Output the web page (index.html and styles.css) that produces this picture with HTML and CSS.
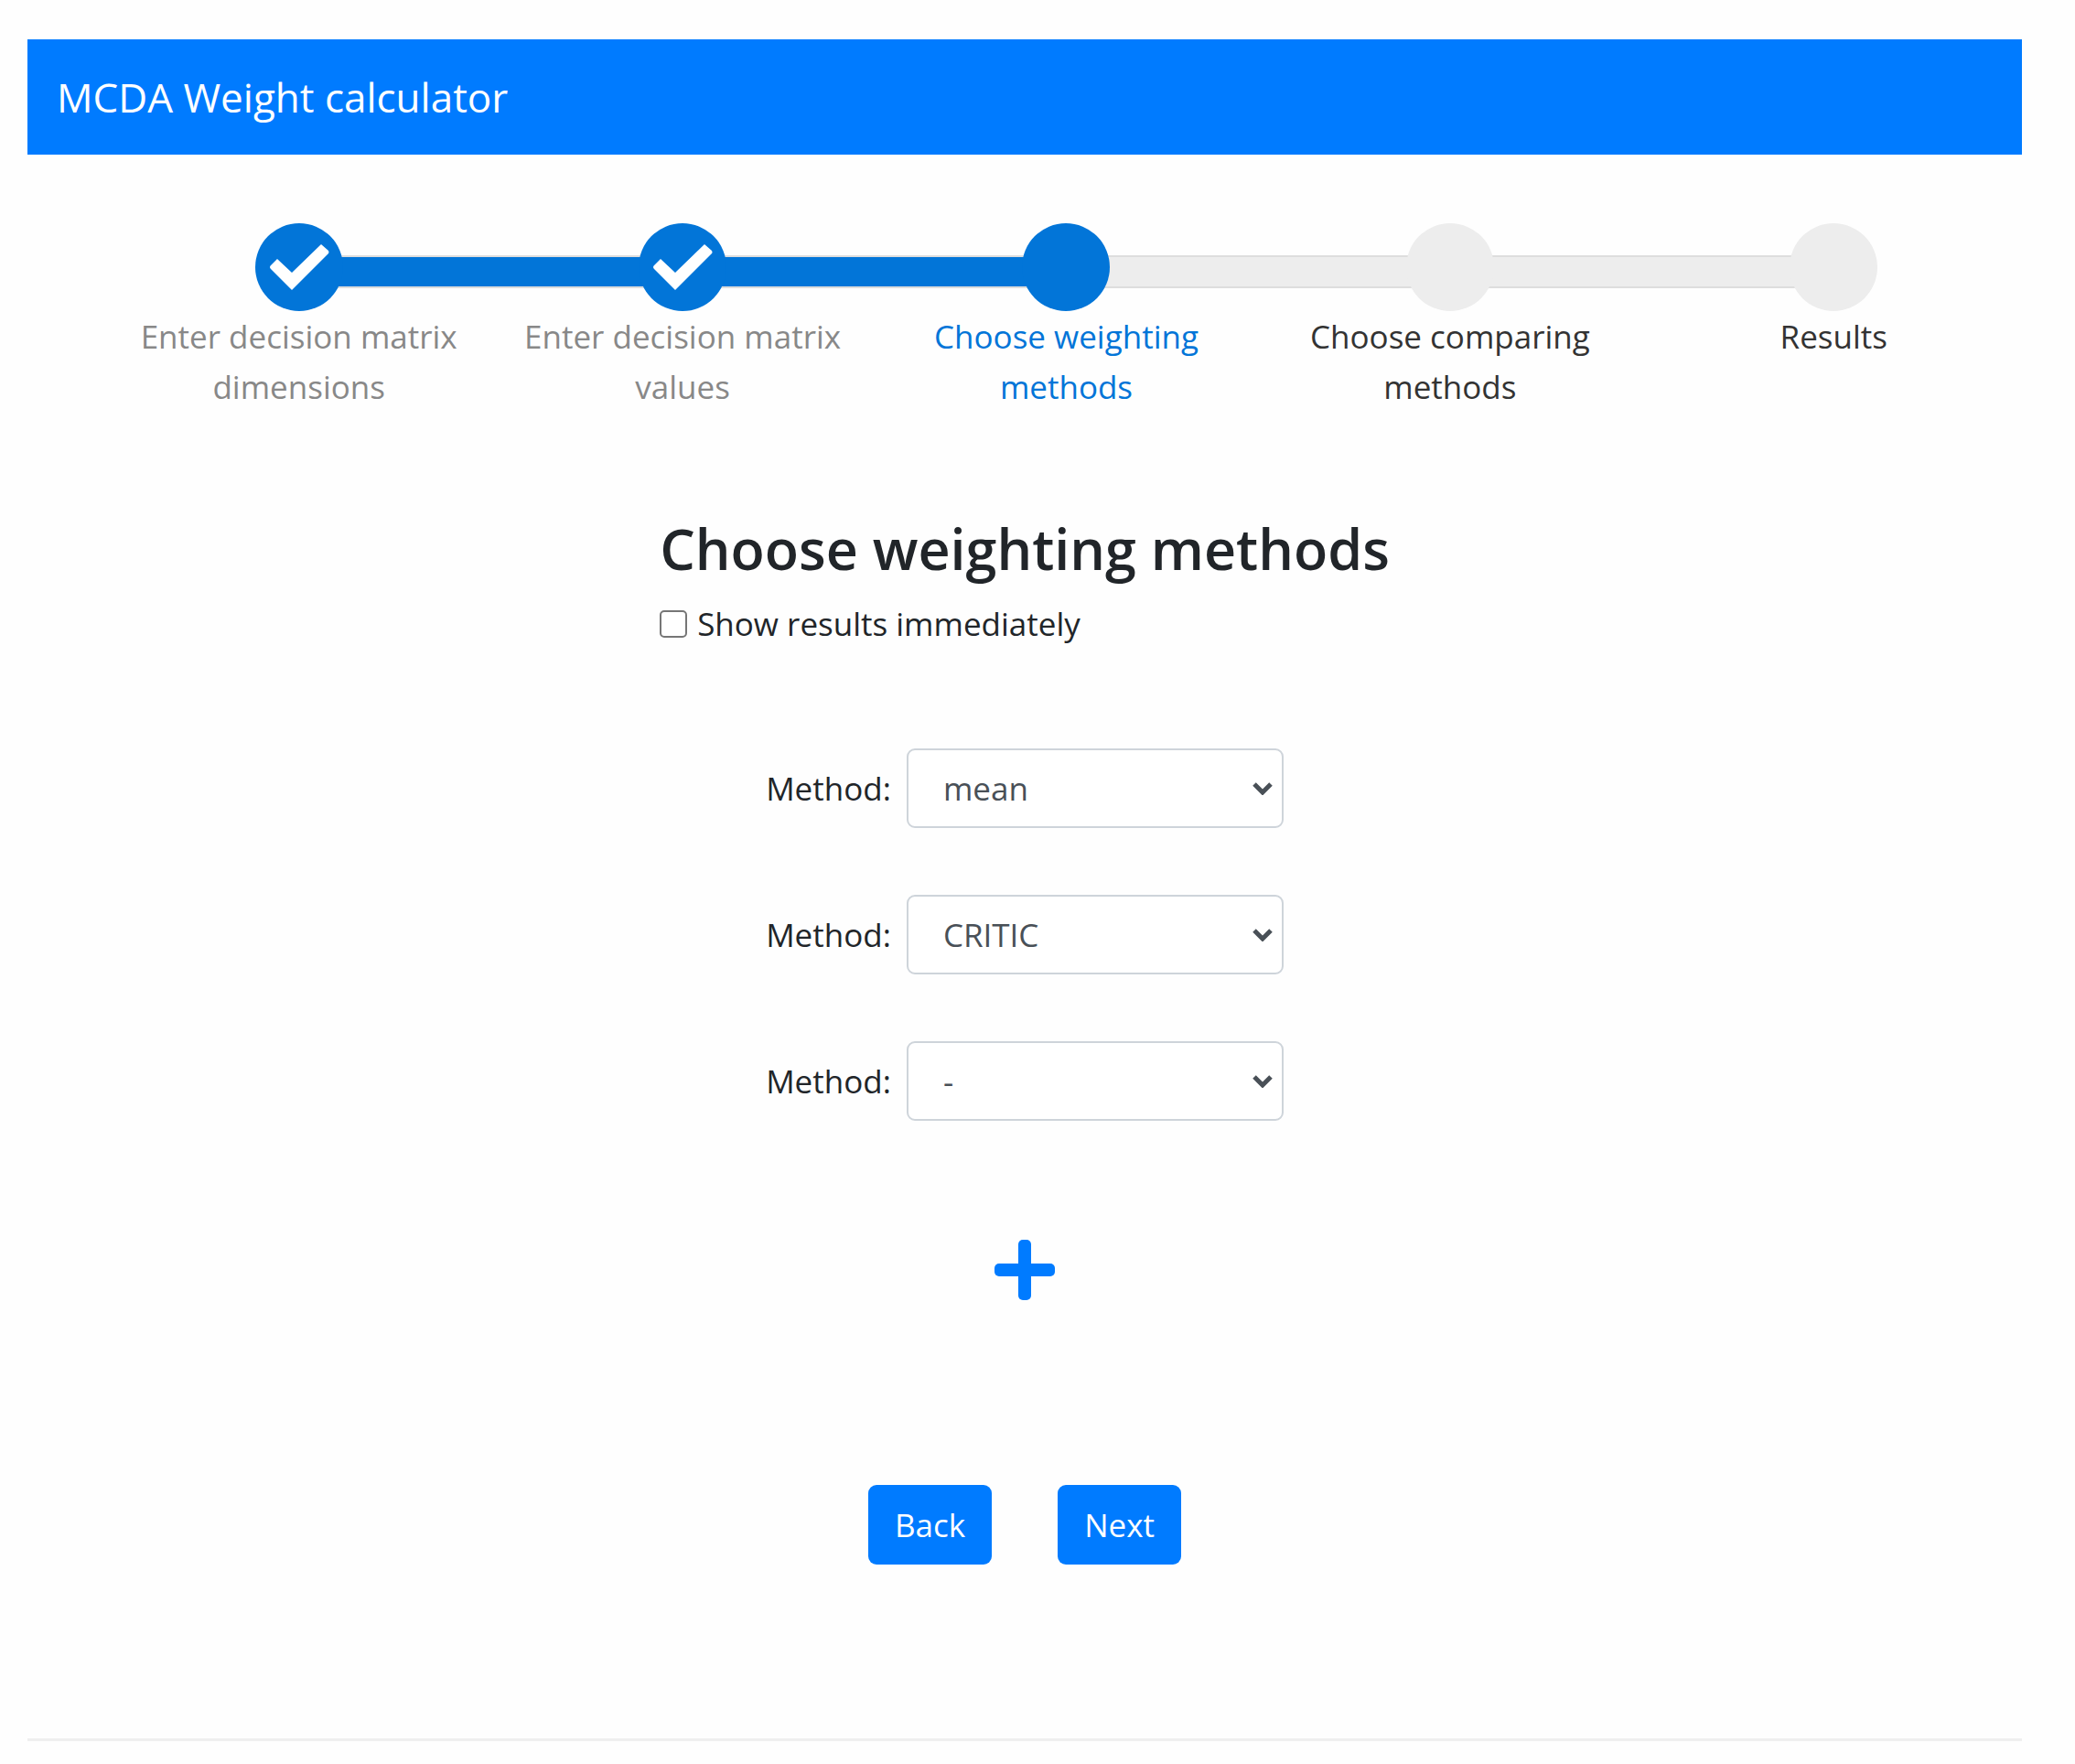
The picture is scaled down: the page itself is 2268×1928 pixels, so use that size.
FILE: index.html
```html
<!DOCTYPE html>
<html lang="en">
<head>
  <meta charset="utf-8">
  <title>MCDA Weight calculator</title>
  <link rel="stylesheet" href="styles.css">
</head>
<body>
  <header class="navbar">MCDA Weight calculator</header>

  <ol class="steps">
    <li class="step done">
      <span class="marker"><svg class="check" viewBox="0 0 96 96" aria-hidden="true"><path d="M17 46L24 39L40 54L72 23L80 30Q81 32 80 33L40 73L17 50Q15 48 17 46Z"/></svg></span>
      <span class="step-label">Enter decision matrix dimensions</span>
    </li>
    <li class="step done">
      <span class="marker"><svg class="check" viewBox="0 0 96 96" aria-hidden="true"><path d="M17 46L24 39L40 54L72 23L80 30Q81 32 80 33L40 73L17 50Q15 48 17 46Z"/></svg></span>
      <span class="step-label">Enter decision matrix values</span>
    </li>
    <li class="step active" aria-current="step">
      <span class="marker"></span>
      <span class="step-label">Choose weighting methods</span>
    </li>
    <li class="step">
      <span class="marker"></span>
      <span class="step-label">Choose comparing methods</span>
    </li>
    <li class="step">
      <span class="marker"></span>
      <span class="step-label">Results</span>
    </li>
  </ol>

  <main>
    <form class="form">
      <div class="intro">
        <h1>Choose weighting methods</h1>
        <label class="check-row"><input type="checkbox" class="tick"> Show results immediately</label>
      </div>

      <div class="methods">
        <div class="method">
          <label for="method1">Method:</label>
          <span class="select-wrap">
            <select id="method1"><option>-</option><option selected>mean</option><option>CRITIC</option></select>
            <svg class="chevron" viewBox="0 0 22 14" aria-hidden="true"><path d="M2 2L11 11L20 2"/></svg>
          </span>
        </div>
        <div class="method">
          <label for="method2">Method:</label>
          <span class="select-wrap">
            <select id="method2"><option>-</option><option>mean</option><option selected>CRITIC</option></select>
            <svg class="chevron" viewBox="0 0 22 14" aria-hidden="true"><path d="M2 2L11 11L20 2"/></svg>
          </span>
        </div>
        <div class="method">
          <label for="method3">Method:</label>
          <span class="select-wrap">
            <select id="method3"><option selected>-</option><option>mean</option><option>CRITIC</option></select>
            <svg class="chevron" viewBox="0 0 22 14" aria-hidden="true"><path d="M2 2L11 11L20 2"/></svg>
          </span>
        </div>
      </div>

      <button type="button" class="add" aria-label="Add method">
        <svg viewBox="0 0 66 66" aria-hidden="true"><rect x="26" y="0" width="14" height="66" rx="5"/><rect x="0" y="26" width="66" height="14" rx="5"/></svg>
      </button>

      <div class="actions">
        <button type="button" class="btn">Back</button>
        <button type="button" class="btn">Next</button>
      </div>
    </form>
  </main>
  <hr class="rule">
</body>
</html>
```
FILE: styles.css
```css
*,
*::before {
  box-sizing: border-box;
}

body {
  margin: 0;
  padding: 43px 58px 24px 30px;
  background: #fefefe;
  color: #212529;
  font-family: "Open Sans", "Noto Sans", sans-serif;
  font-size: 35px;
  line-height: 55px;
}

.navbar {
  padding: 28px 32px;
  background: #007bff;
  color: #fff;
  font-size: 44px;
  line-height: 70px;
}

.steps {
  display: grid;
  grid-template-columns: repeat(5, 1fr);
  margin: 75px -4px 0 87px;
  padding: 0;
  list-style: none;
}

.step {
  position: relative;
  display: flex;
  flex-direction: column;
  align-items: center;
  text-align: center;
  color: #333;
}

/* connector running from this marker to the next one */
.step:not(:last-child)::before {
  content: "";
  position: absolute;
  top: 35px;
  left: 50%;
  width: 100%;
  height: 36px;
  border: solid #ddd;
  border-width: 2px 0;
  background: #ededed;
}

.step.done:not(:last-child)::before {
  background: #0275d8;
  background-clip: padding-box;
}

.marker {
  position: relative;
  z-index: 1;
  width: 96px;
  height: 96px;
  border-radius: 50%;
  background: #ededed;
}

.done .marker,
.active .marker {
  background: #0275d8;
}

.check {
  display: block;
  fill: #fff;
}

.step-label {
  max-width: 360px;
}

.done .step-label {
  color: #888;
}

.active .step-label {
  color: #0275d8;
}

.form {
  display: flex;
  flex-direction: column;
  align-items: center;
  padding-top: 112px;
}

h1 {
  margin: 0;
  font-size: 61px;
  font-weight: 600;
  line-height: 76px;
}

.check-row {
  display: flex;
  align-items: center;
  gap: 11px;
  margin-top: 16px;
}

.tick {
  appearance: none;
  width: 30px;
  height: 30px;
  margin: 0;
  border: 2px solid #767676;
  border-radius: 5px;
  background: #fff;
}

.methods {
  display: flex;
  flex-direction: column;
  gap: 73px;
  margin-top: 109px;
}

.method {
  display: flex;
  align-items: center;
  gap: 17px;
}

.select-wrap {
  position: relative;
}

select {
  appearance: none;
  display: block;
  width: 412px;
  height: 87px;
  padding: 0 38px;
  border: 2px solid #ced4da;
  border-radius: 9px;
  background: #fff;
  color: #495057;
  font: inherit;
}

.chevron {
  position: absolute;
  top: 37px;
  right: 12px;
  width: 22px;
  height: 14px;
  fill: none;
  stroke: #495057;
  stroke-width: 5;
  pointer-events: none;
}

.add {
  width: 66px;
  height: 66px;
  margin-top: 130px;
  padding: 0;
  border: 0;
  background: none;
  fill: #007bff;
}

.add svg {
  display: block;
}

.actions {
  display: flex;
  gap: 72px;
  margin-top: 202px;
}

.btn {
  height: 87px;
  padding: 0 29px;
  border: 0;
  border-radius: 9px;
  background: #007bff;
  color: #fff;
  font: inherit;
}

.rule {
  height: 3px;
  margin: 190px 0 0;
  border: 0;
  background: #efefef;
}
```
